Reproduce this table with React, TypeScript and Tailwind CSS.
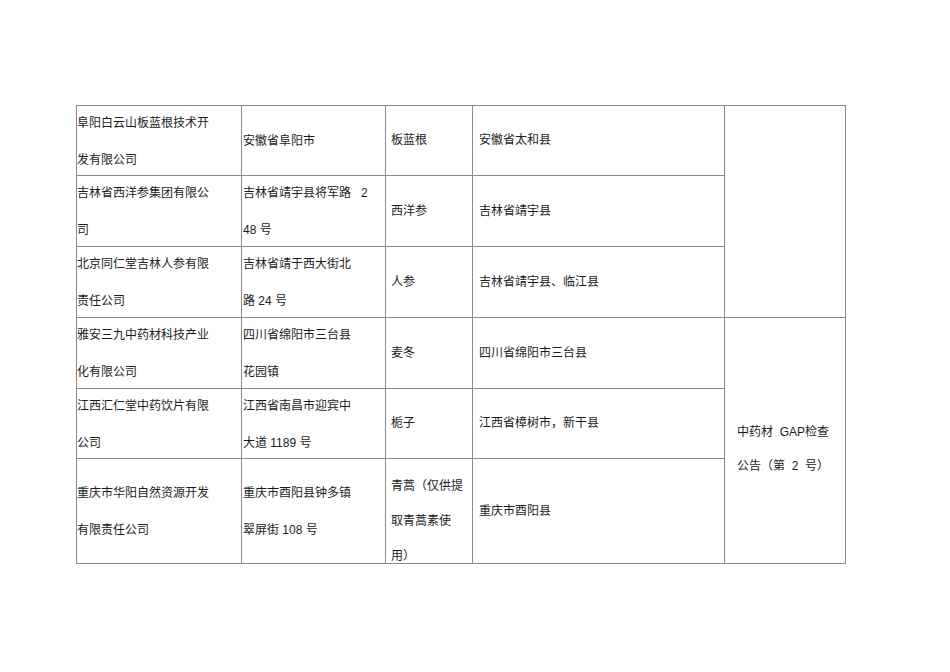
type Row = {
  company: string[];
  address: string[];
  herb: string[];
  base: string;
};

const rows: Row[] = [
  {
    company: ['阜阳白云山板蓝根技术开', '发有限公司'],
    address: ['安徽省阜阳市'],
    herb: ['板蓝根'],
    base: '安徽省太和县',
  },
  {
    company: ['吉林省西洋参集团有限公', '司'],
    address: ['吉林省靖宇县将军路\u00a0\u00a0 2', '48 号'],
    herb: ['西洋参'],
    base: '吉林省靖宇县',
  },
  {
    company: ['北京同仁堂吉林人参有限', '责任公司'],
    address: ['吉林省靖于西大街北', '路 24 号'],
    herb: ['人参'],
    base: '吉林省靖宇县、临江县',
  },
  {
    company: ['雅安三九中药材科技产业', '化有限公司'],
    address: ['四川省绵阳市三台县', '花园镇'],
    herb: ['麦冬'],
    base: '四川省绵阳市三台县',
  },
  {
    company: ['江西汇仁堂中药饮片有限', '公司'],
    address: ['江西省南昌市迎宾中', '大道 1189 号'],
    herb: ['栀子'],
    base: '江西省樟树市，新干县',
  },
  {
    company: ['重庆市华阳自然资源开发', '有限责任公司'],
    address: ['重庆市酉阳县钟多镇', '翠屏街 108 号'],
    herb: ['青蒿（仅供提', '取青蒿素使', '用）'],
    base: '重庆市酉阳县',
  },
];

function Lines({ lines }: { lines: string[] }) {
  return (
    <>
      {lines.map((l, i) => (
        <span key={i} className="block whitespace-pre">
          {l}
        </span>
      ))}
    </>
  );
}

export default function App() {
  return (
    <div
      className="min-h-[672px] w-[950px] bg-white pt-[105px] pl-[76px] text-[12px] text-[#1c1c1c]"
      style={{ fontFamily: '"Liberation Sans", "Noto Sans CJK SC", sans-serif' }}
    >
      <div className="grid w-fit grid-cols-[164px_143px_86px_251px_120px] grid-rows-[69px_70px_70px_70px_69px_104px] gap-px bg-[#8a8a8a] p-px">
        {rows.map((r, i) => {
          const last = i === rows.length - 1;
          return [
            <div key={`c${i}`} className="flex flex-col justify-center bg-white pt-[2px] leading-[37px]">
              <Lines lines={r.company} />
            </div>,
            <div key={`a${i}`} className="flex flex-col justify-center bg-white pt-[2px] pl-px leading-[37px]">
              <Lines lines={r.address} />
            </div>,
            <div
              key={`h${i}`}
              className={
                last
                  ? 'flex flex-col justify-start bg-white pt-[10px] pl-[5px] leading-[35px]'
                  : 'flex flex-col justify-center bg-white pl-[5px] leading-[35px]'
              }
            >
              <Lines lines={r.herb} />
            </div>,
            <div key={`b${i}`} className="flex flex-col justify-center bg-white pl-[6px] leading-[35px]">
              {r.base}
            </div>,
            i === 0 ? (
              <div key="n1" className="row-span-3 bg-white" />
            ) : i === 3 ? (
              <div key="n2" className="row-span-3 flex flex-col justify-center bg-white pt-[16px] pl-[12px] leading-[34px]">
                <span className="block whitespace-pre">{'中药材\u00a0 GAP检查'}</span>
                <span className="block whitespace-pre">{'公告（第\u00a0\u00a02\u00a0\u00a0号）'}</span>
              </div>
            ) : null,
          ];
        })}
      </div>
    </div>
  );
}
